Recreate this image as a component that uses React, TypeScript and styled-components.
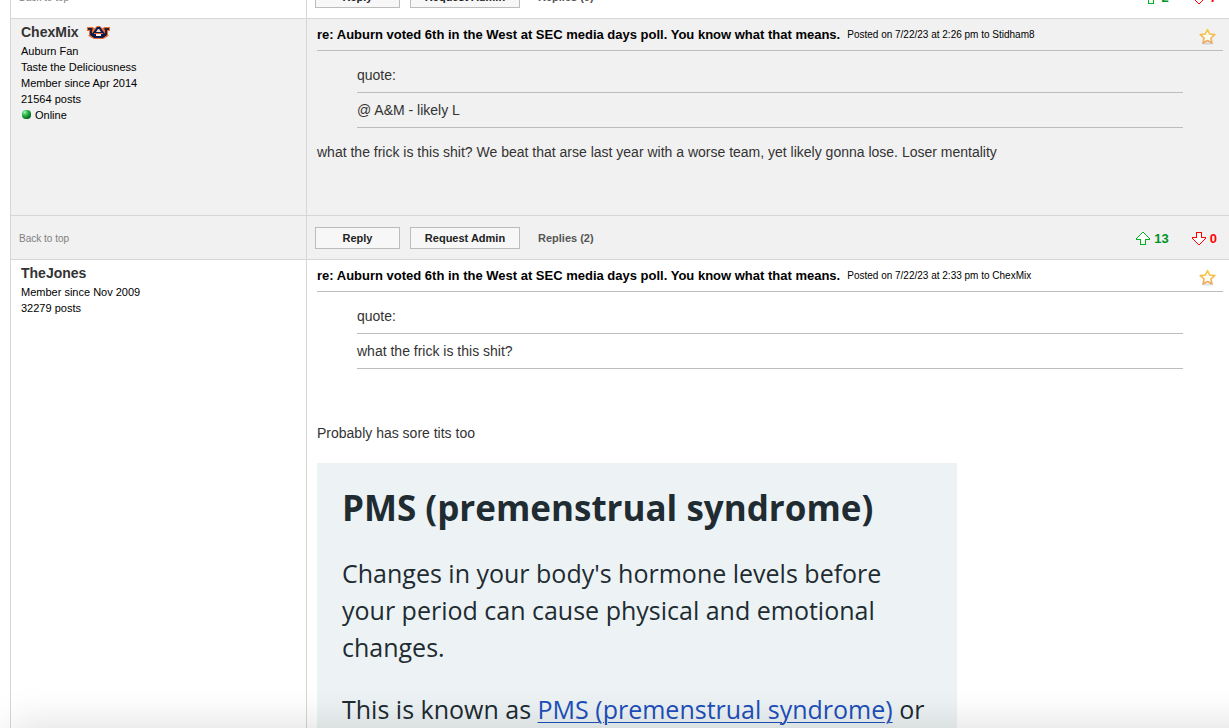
import React from "react";
import styled, { createGlobalStyle } from "styled-components";

const GlobalStyle = createGlobalStyle`
  * { box-sizing: border-box; }
  body {
    margin: 0;
    background: #fff;
    font-family: "Liberation Sans", Arial, sans-serif;
    font-size: 14px;
    color: #333;
  }
  h2, h3, p, ul, blockquote { margin: 0; padding: 0; font-weight: inherit; }
`;

const Viewport = styled.div`
  position: relative;
  height: 100vh;
  overflow: hidden;
`;

/* The thread is scrolled so that only the end of the first footer shows. */
const Thread = styled.main`
  margin: -26px 0 0 10px;
  border-left: 1px solid #d6d6d6;
`;

const Row = styled.div<{ $shaded?: boolean }>`
  display: grid;
  grid-template-columns: 296px 1fr;
  border-top: 1px solid #d6d6d6;
  background: ${(p) => (p.$shaded ? "#f1f1f1" : "#fff")};
`;

const PostRow = styled(Row)<{ $tall?: boolean }>`
  min-height: ${(p) => (p.$tall ? 520 : 197)}px;
`;

const FooterRow = styled(Row)`
  height: 44px;
`;

const Author = styled.aside`
  padding: 4px 10px;
  border-right: 1px solid #d6d6d6;
  font-size: 11px;
  line-height: 16px;
  color: #000;
`;

const AuthorName = styled.h2`
  display: flex;
  align-items: center;
  gap: 8px;
  padding-bottom: 2px;
  font-size: 14px;
  line-height: 18px;
  font-weight: bold;
  color: #333;
`;

const Status = styled.p`
  display: flex;
  align-items: center;
  gap: 4px;
`;

const Content = styled.article`
  min-width: 0;
  padding: 0 6px 0 10px;
`;

const PostHead = styled.header`
  display: flex;
  align-items: center;
  height: 32px;
  border-bottom: 1px solid #bcbcbc;
`;

const Title = styled.h3`
  font-size: 13px;
  line-height: 16px;
  font-weight: bold;
  color: #000;
  white-space: nowrap;
`;

const Posted = styled.span`
  margin-left: 7px;
  padding-top: 1px;
  font-size: 10px;
  line-height: 16px;
  color: #000;
  white-space: nowrap;
`;

const StarButton = styled.button`
  display: flex;
  margin: 4px 7px 0 auto;
  padding: 0;
  border: 0;
  background: none;
`;

const Quote = styled.blockquote`
  margin: 14px 40px 0;
  line-height: 20px;
`;

const QuoteText = styled.p`
  margin-top: 7px;
  padding: 7px 0;
  border: 1px solid #bcbcbc;
  border-width: 1px 0;
`;

const Text = styled.p<{ $spaced?: boolean }>`
  margin-top: ${(p) => (p.$spaced ? 54 : 14)}px;
  line-height: 20px;
`;

const FooterLeft = styled.div`
  display: flex;
  align-items: center;
  padding: 2px 8px 0;
  border-right: 1px solid #d6d6d6;
`;

const TopLink = styled.a`
  font-size: 10px;
  color: #808080;
  text-decoration: none;
`;

const FooterBar = styled.div`
  display: flex;
  align-items: center;
  gap: 10px;
  padding: 1px 12px 0 8px;
`;

const Button = styled.button<{ $wide?: boolean }>`
  width: ${(p) => (p.$wide ? 110 : 85)}px;
  height: 22px;
  padding: 0;
  border: 1px solid #bcbcbc;
  background: #f7f7f7;
  font: bold 11px "Liberation Sans", Arial, sans-serif;
  color: #222;
`;

const Replies = styled.a`
  margin-left: 8px;
  font-size: 11px;
  font-weight: bold;
  color: #555;
  text-decoration: none;
`;

const Votes = styled.div`
  display: flex;
  gap: 23px;
  margin-left: auto;
`;

const Vote = styled.button<{ $down?: boolean }>`
  display: flex;
  align-items: center;
  gap: 4px;
  padding: 0;
  border: 0;
  background: none;
  font: bold 13px "Liberation Sans", Arial, sans-serif;
  color: ${(p) => (p.$down ? "#f00" : "#009328")};
`;

const Card = styled.section`
  max-width: 640px;
  margin-top: 20px;
  padding: 24px 25px;
  background: #edf3f4;
  font-family: "Open Sans", "Noto Sans", sans-serif;
  font-size: 25px;
  line-height: 37px;
  color: #212b32;
`;

const CardTitle = styled.h2`
  margin-bottom: 26px;
  font-size: 35px;
  line-height: 42px;
  font-weight: bold;
`;

const CardText = styled.p`
  margin-bottom: 25px;
  white-space: nowrap;
`;

const CardLink = styled.a`
  color: #1d4fbb;
  text-decoration: underline;
  text-decoration-thickness: 1px;
  text-underline-offset: 3px;
`;

/* Shadow cast upwards by the panel docked under the window. */
const DockShadow = styled.div`
  position: absolute;
  top: 100%;
  left: 10px;
  right: -60px;
  height: 60px;
  box-shadow: 0 0 44px rgba(0, 0, 0, 0.15);
  pointer-events: none;
`;

const AuburnLogo = () => (
  <svg width="23" height="13" viewBox="0 0 23 13" aria-label="Auburn">
    <path d="M0 1h6l1 1h1l2-2h3l2 2h1l1-1h6v4h-2v4h1l-2 2-4 2H7l-4-2-2-2h1V5H0z" fill="#e2703c" />
    <path d="M1 2h4l1 1-1 1v3l2 1-1 3-3-2V4H1zM22 2h-4l-1 1 1 1v3l-2 1 1 3 3-2V4h2z" fill="#2b1c2e" />
    <path d="M10 1h3l5 7h1v2h-5V8H9v2H4V8h1z" fill="#0d1a4c" />
    <path d="M4 9l4 1h7l4-1-3 3H7z" fill="#0d1a4c" />
    <path d="M11 3h1l2 3H9z" fill="#f4d9cc" />
    <path d="M9 8h5v2H9z" fill="#fbf3ef" />
    <path d="M7 7h9v1H7z" fill="#e2703c" />
  </svg>
);

const OnlineDot = () => (
  <svg width="10" height="10" viewBox="0 0 10 10" aria-hidden="true">
    <defs>
      <radialGradient id="online" cx="0.3" cy="0.25" r="0.8">
        <stop offset="0" stopColor="#a5f3b8" />
        <stop offset="0.4" stopColor="#2fc04f" />
        <stop offset="1" stopColor="#04611c" />
      </radialGradient>
    </defs>
    <rect x="1" y="0" width="9" height="9" rx="4" fill="url(#online)" />
  </svg>
);

const Star = () => (
  <svg width="17" height="17" viewBox="0 0 17 17" aria-hidden="true">
    <defs>
      <linearGradient id="star" x1="0" y1="0" x2="0" y2="1">
        <stop offset="0" stopColor="#fccb3a" />
        <stop offset="1" stopColor="#eba768" />
      </linearGradient>
    </defs>
    <ellipse cx="8.5" cy="15.6" rx="6" ry="1" fill="#000" opacity="0.12" />
    <path
      d="M8.500 1.500l2.100 4.500 5.200.6-3.900 3.400 1.100 5-4.500-2.500L4 15l1.100-5L1.200 6.600l5.200-.6z"
      fill="#fffdf2"
      stroke="url(#star)"
      strokeWidth="1.600"
      strokeLinejoin="round"
    />
  </svg>
);

const Arrow = ({ down }: { down?: boolean }) => (
  <svg width="14" height="13" viewBox="0 0 14 13" shapeRendering="crispEdges" aria-hidden="true">
    <path
      d={
        down
          ? "M4.500 .5h5v5h4v1l-6 6h-1l-6-6v-1h4z"
          : "M4.500 12.500h5v-5h4v-1l-6-6h-1l-6 6v1h4z"
      }
      fill="#fff"
      stroke={down ? "#f00" : "#00b01c"}
    />
  </svg>
);

const PostFooter = ({ shaded, replies, up, down }: { shaded?: boolean; replies: number; up: number; down: number }) => (
  <FooterRow $shaded={shaded}>
    <FooterLeft>
      <TopLink href="#top">Back to top</TopLink>
    </FooterLeft>
    <FooterBar>
      <Button type="button">Reply</Button>
      <Button type="button" $wide>Request Admin</Button>
      <Replies href="#replies">Replies ({replies})</Replies>
      <Votes>
        <Vote type="button" aria-label="Upvote"><Arrow />{up}</Vote>
        <Vote type="button" aria-label="Downvote" $down><Arrow down />{down}</Vote>
      </Votes>
    </FooterBar>
  </FooterRow>
);

const PostHeader = ({ posted }: { posted: string }) => (
  <PostHead>
    <Title>re: Auburn voted 6th in the West at SEC media days poll. You know what that means.</Title>
    <Posted>{posted}</Posted>
    <StarButton type="button" aria-label="Favorite"><Star /></StarButton>
  </PostHead>
);

export default function App() {
  return (
    <>
      <GlobalStyle />
      <Viewport>
        <Thread>
          <PostFooter replies={0} up={2} down={7} />
          <PostRow $shaded>
            <Author>
              <AuthorName>ChexMix <AuburnLogo /></AuthorName>
              <p>Auburn Fan</p>
              <p>Taste the Deliciousness</p>
              <p>Member since Apr 2014</p>
              <p>21564 posts</p>
              <Status><OnlineDot />Online</Status>
            </Author>
            <Content>
              <PostHeader posted="Posted on 7/22/23 at 2:26 pm to Stidham8" />
              <Quote>
                quote:
                <QuoteText>@ A&amp;M - likely L</QuoteText>
              </Quote>
              <Text>what the frick is this shit? We beat that arse last year with a worse team, yet likely gonna lose. Loser mentality</Text>
            </Content>
          </PostRow>
          <PostFooter shaded replies={2} up={13} down={0} />
          <PostRow $tall>
            <Author>
              <AuthorName>TheJones</AuthorName>
              <p>Member since Nov 2009</p>
              <p>32279 posts</p>
            </Author>
            <Content>
              <PostHeader posted="Posted on 7/22/23 at 2:33 pm to ChexMix" />
              <Quote>
                quote:
                <QuoteText>what the frick is this shit?</QuoteText>
              </Quote>
              <Text $spaced>Probably has sore tits too</Text>
              <Card>
                <CardTitle>PMS (premenstrual syndrome)</CardTitle>
                <CardText>
                  Changes in your body's hormone levels before<br />
                  your period can cause physical and emotional<br />
                  changes.
                </CardText>
                <CardText>
                  This is known as <CardLink href="#pms">PMS (premenstrual syndrome)</CardLink> or
                </CardText>
              </Card>
            </Content>
          </PostRow>
        </Thread>
        <DockShadow />
      </Viewport>
    </>
  );
}
